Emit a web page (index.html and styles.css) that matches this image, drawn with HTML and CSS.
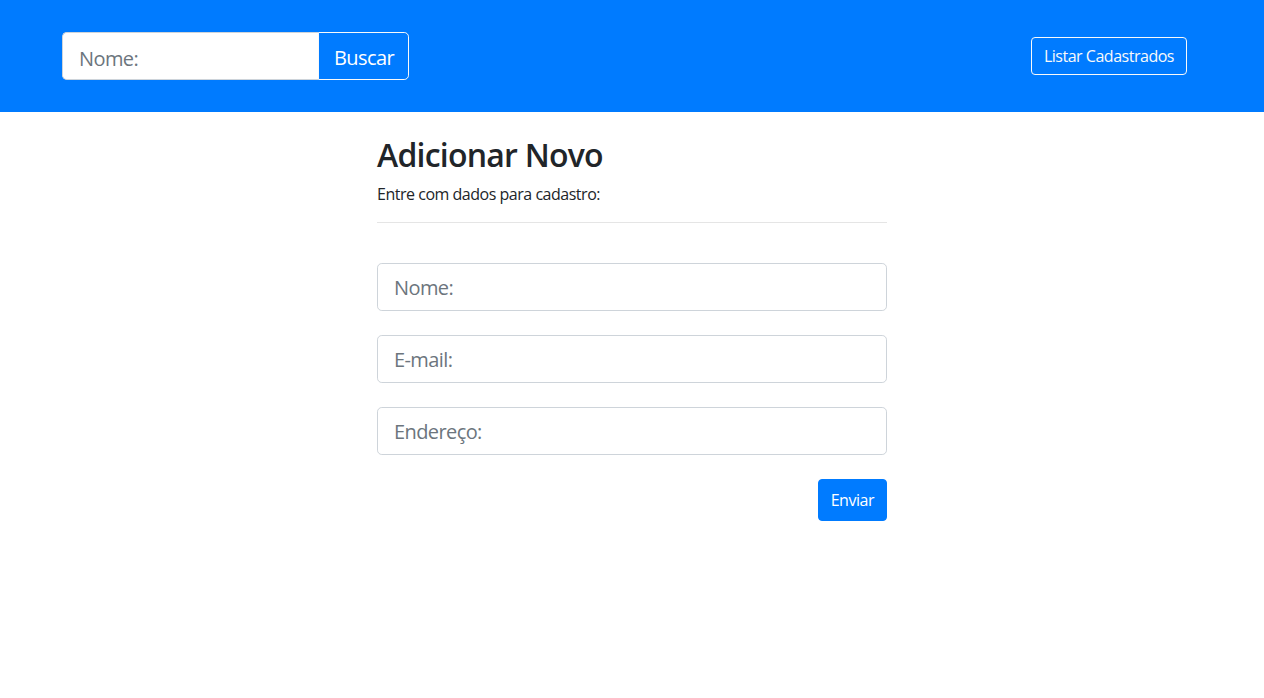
FILE: index.html
```html
<!DOCTYPE html>
<html lang="pt-BR">
<head>
<meta charset="utf-8">
<title>Cadastro</title>
<link rel="stylesheet" href="styles.css">
</head>
<body>
<header class="navbar">
  <div class="nav-inner">
    <form class="search">
      <input class="search-input" type="text" placeholder="Nome:">
      <button class="search-btn" type="button">Buscar</button>
    </form>
    <a class="btn-outline" href="#">Listar Cadastrados</a>
  </div>
</header>
<main class="container">
  <h2 class="title">Adicionar Novo</h2>
  <p class="lead-text">Entre com dados para cadastro:</p>
  <hr class="divider">
  <form class="form">
    <div class="field"><input class="input" type="text" placeholder="Nome:"></div>
    <div class="field"><input class="input" type="email" placeholder="E-mail:"></div>
    <div class="field"><input class="input" type="text" placeholder="Endereço:"></div>
    <div class="actions"><button class="btn-primary" type="button">Enviar</button></div>
  </form>
</main>
</body>
</html>
```
FILE: styles.css
```css
* { box-sizing: border-box; }
html, body { margin: 0; padding: 0; }
body {
  font-family: "Open Sans", "Noto Sans", sans-serif;
  font-size: 16px;
  line-height: 1.5;
  letter-spacing: -0.03em;
  color: #212529;
  background: #fff;
}
.navbar {
  background: #007bff;
  padding: 32px 0;
}
.nav-inner {
  width: 1140px;
  margin: 0 auto;
  display: flex;
  justify-content: space-between;
  align-items: center;
}
.search {
  display: flex;
  margin: 0;
}
.search-input {
  width: 256px;
  height: 48px;
  padding: 10px 16px 6px;
  font: inherit;
  font-size: 20px;
  line-height: 1.5;
  letter-spacing: -0.03em;
  color: #495057;
  background: #fff;
  border: 1px solid #ced4da;
  border-right: 0;
  border-radius: 4.8px 0 0 4.8px;
  outline: none;
}
.search-input::placeholder, .input::placeholder { color: #6c757d; opacity: 1; }
.search-btn {
  height: 48px;
  width: 91px;
  padding: 10px 10px 6px 11px;
  font: inherit;
  font-size: 20px;
  line-height: 1.5;
  letter-spacing: -0.03em;
  color: #fff;
  background: transparent;
  border: 1px solid #f8f9fa;
  border-radius: 0 4.8px 4.8px 0;
  cursor: pointer;
}
.btn-outline {
  margin-right: 15px;
  display: inline-block;
  height: 38px;
  padding: 6px 12px;
  color: #f8f9fa;
  text-decoration: none;
  border: 1px solid #f8f9fa;
  border-radius: 4px;
  font-size: 16px;
  line-height: 24px;
}
.container {
  width: 510px;
  margin: 0 auto;
  padding-top: 24px;
}
.title {
  margin: 0 0 8px;
  font-size: 32px;
  font-weight: 600;
  line-height: 1.2;
  letter-spacing: -0.024em;
}
.lead-text {
  margin: 0 0 16px;
}
.divider {
  margin: 16px 0 0;
  border: 0;
  border-top: 1px solid rgba(0,0,0,.1);
}
.form { margin: 0; padding-top: 40px; }
.field { margin-bottom: 24px; }
.input {
  display: block;
  width: 100%;
  height: 48px;
  padding: 8px 16px;
  font: inherit;
  font-size: 20px;
  line-height: 1.5;
  letter-spacing: -0.03em;
  color: #495057;
  background: #fff;
  border: 1px solid #ced4da;
  border-radius: 4.8px;
  outline: none;
}
.actions {
  display: flex;
  justify-content: flex-end;
}
.btn-primary {
  height: 42px;
  padding: 8px 12px;
  font: inherit;
  font-size: 16px;
  line-height: 24px;
  letter-spacing: -0.03em;
  color: #fff;
  background: #007bff;
  border: 1px solid #007bff;
  border-radius: 4px;
  cursor: pointer;
}
```
